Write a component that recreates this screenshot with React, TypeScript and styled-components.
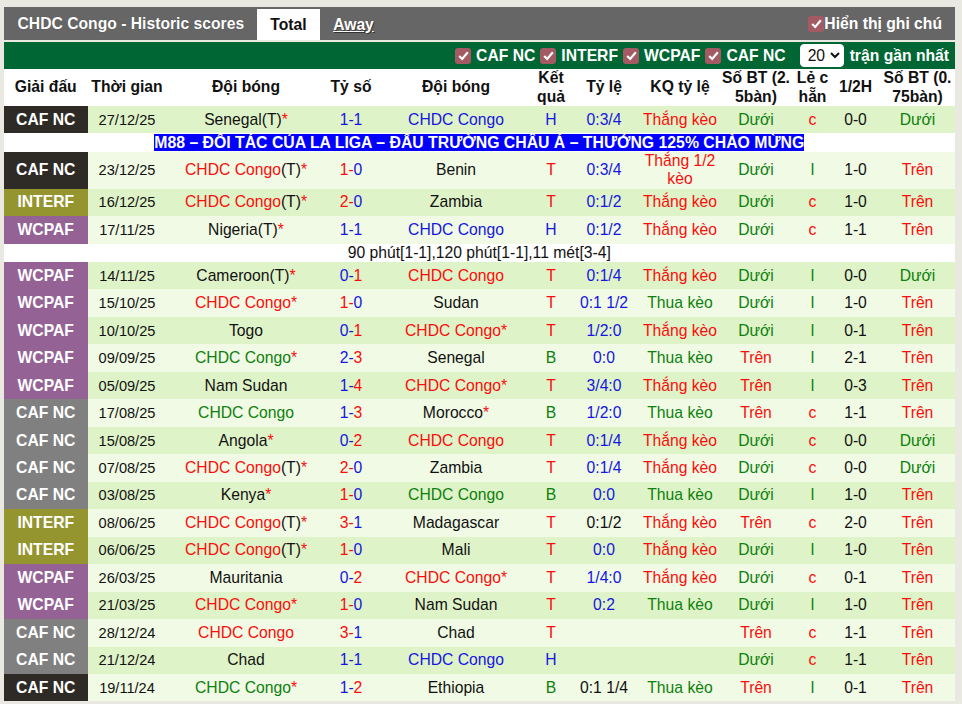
import React from 'react';
import styled, { createGlobalStyle } from 'styled-components';

const GlobalStyle = createGlobalStyle`
  html, body {
    margin: 0;
    padding: 0;
    background: #e9e8e1;
    font-family: "Liberation Sans", Arial, sans-serif;
    color: #111;
  }
`;

const RED = '#fa0d0d';
const BLUE = '#1616e0';
const GREEN = '#0d800d';
const INK = '#111111';

const LEAGUE_BG: Record<string, string> = {
  dark: '#2e2a26',
  olive: '#95952f',
  purple: '#956295',
  gray: '#808080',
};

const Page = styled.div`
  width: 951.5px;
  height: 704px;
  margin-left: 3.5px;
  padding-top: 7px;
  box-sizing: border-box;
  overflow: hidden;
`;

const TitleBar = styled.div`
  display: flex;
  align-items: flex-end;
  height: 33px;
  background: #666666;
  color: #ffffff;
  font-weight: bold;
  font-size: 15.7px;
`;

const Title = styled.div`
  align-self: center;
  padding-left: 14px;
  width: 239.5px;
  text-shadow: 0 0 1px rgba(0, 0, 0, 0.4);
`;

const Tab = styled.a<{ $active?: boolean }>`
  height: 31px;
  line-height: 31px;
  text-align: center;
  width: ${(p) => (p.$active ? '63px' : '67px')};
  background: ${(p) => (p.$active ? '#ffffff' : 'transparent')};
  color: ${(p) => (p.$active ? '#111111' : '#ffffff')};
  text-decoration: ${(p) => (p.$active ? 'none' : 'underline')};
  text-shadow: ${(p) => (p.$active ? 'none' : '1px 1px 1px rgba(0, 0, 0, 0.5)')};
`;

const NoteToggle = styled.label`
  align-self: center;
  margin-left: auto;
  margin-right: 13px;
  display: flex;
  align-items: center;
`;

const Box = styled.span`
  display: inline-flex;
  align-items: center;
  justify-content: center;
  width: 16px;
  height: 16px;
  border-radius: 3px;
  background: #a35a62;
  flex: none;
`;

const FilterBar = styled.div`
  display: flex;
  align-items: center;
  justify-content: flex-end;
  height: 27px;
  margin-top: 2px;
  padding-right: 6px;
  background: #006633;
  color: #ffffff;
  font-weight: bold;
  font-size: 15.7px;
`;

const Filter = styled.label`
  display: flex;
  align-items: center;
  gap: 5px;
  margin-left: 5px;
`;

const Count = styled.select`
  width: 44px;
  height: 23px;
  margin: 0 6px 0 14px;
  padding: 0 0 0 3px;
  border: 1px solid #ffffff;
  border-radius: 4px;
  background: #ffffff;
  color: #111111;
  font-family: inherit;
  font-size: 15.7px;
`;

const Table = styled.table`
  width: 951.5px;
  table-layout: fixed;
  border-collapse: collapse;
  border-spacing: 0;
  font-size: 15.7px;
  background: #ffffff;
`;

const Column = styled.col<{ $w: number }>`
  width: ${(p) => p.$w}px;
`;

const HeadCell = styled.th`
  height: 37px;
  padding: 0;
  font-weight: bold;
  font-size: 15.7px;
  line-height: 18.5px;
  text-align: center;
  color: #111111;
`;

const Row = styled.tr<{ $even: boolean }>`
  height: 27.47px;
  background: ${(p) => (p.$even ? '#dff3c8' : '#f0fae4')};
`;

const TallRow = styled(Row)`
  height: 36.7px;
`;

const Cell = styled.td<{ $color?: string }>`
  padding: 0;
  text-align: center;
  line-height: 18px;
  color: ${(p) => p.$color || INK};
`;

const DateCell = styled(Cell)`
  font-size: 14.6px;
`;

const LeagueCell = styled.td<{ $kind: string }>`
  padding: 0;
  text-align: center;
  font-weight: bold;
  color: #ffffff;
  background: ${(p) => LEAGUE_BG[p.$kind]};
`;

const Star = styled.span`
  color: ${RED};
`;

const Tinted = styled.span<{ $color: string }>`
  color: ${(p) => p.$color};
`;

const AdRow = styled.tr`
  height: 18.5px;
  background: #ffffff;
`;

const AdCell = styled.td`
  padding: 0;
  text-align: center;
  font-size: 15.8px;
  line-height: 18px;
  font-weight: bold;
  white-space: nowrap;
`;

const AdText = styled.span`
  background: #0000ff;
  color: #ffffff;
`;

const NoteRow = styled.tr`
  height: 18.4px;
  background: #ffffff;
`;

const NoteCell = styled.td`
  padding: 0;
  text-align: center;
  line-height: 18px;
`;

const CheckBox = () => (
  <Box>
    <svg width="13" height="13" viewBox="0 0 12 12" fill="none">
      <path d="M2 6.4 4.8 9.2 10 3" stroke="#ffffff" strokeWidth="2" />
    </svg>
  </Box>
);

type Team = { name: string; color?: string; neutral?: boolean; star?: boolean };

type Match = {
  league: string;
  label: string;
  date: string;
  home: Team;
  score: [number, number];
  away: Team;
  result: string;
  odds: string;
  oddsColor?: string;
  pick: string;
  goals: string;
  parity: string;
  half: string;
  early: string;
};

const congo = (color: string, neutral = false, star = false): Team => ({
  name: 'CHDC Congo',
  color,
  neutral,
  star,
});
const team = (name: string, neutral = false, star = false): Team => ({ name, neutral, star });

const m = (
  league: string,
  label: string,
  date: string,
  home: Team,
  score: [number, number],
  away: Team,
  result: string,
  odds: string,
  pick: string,
  goals: string,
  parity: string,
  half: string,
  early: string,
  oddsColor?: string,
): Match => ({ league, label, date, home, score, away, result, odds, pick, goals, parity, half, early, oddsColor });

const WIN = 'Thắng kèo';
const LOSE = 'Thua kèo';
const UP = 'Trên';
const DOWN = 'Dưới';

const MATCHES: Match[] = [
  m('dark', 'CAF NC', '27/12/25', team('Senegal', true, true), [1, 1], congo(BLUE), 'H', '0:3/4', WIN, DOWN, 'c', '0-0', DOWN),
  m('dark', 'CAF NC', '23/12/25', congo(RED, true, true), [1, 0], team('Benin'), 'T', '0:3/4', 'Thắng 1/2 kèo', DOWN, 'l', '1-0', UP),
  m('olive', 'INTERF', '16/12/25', congo(RED, true, true), [2, 0], team('Zambia'), 'T', '0:1/2', WIN, DOWN, 'c', '1-0', UP),
  m('purple', 'WCPAF', '17/11/25', team('Nigeria', true, true), [1, 1], congo(BLUE), 'H', '0:1/2', WIN, DOWN, 'c', '1-1', UP),
  m('purple', 'WCPAF', '14/11/25', team('Cameroon', true, true), [0, 1], congo(RED), 'T', '0:1/4', WIN, DOWN, 'l', '0-0', DOWN),
  m('purple', 'WCPAF', '15/10/25', congo(RED, false, true), [1, 0], team('Sudan'), 'T', '0:1 1/2', LOSE, DOWN, 'l', '1-0', UP),
  m('purple', 'WCPAF', '10/10/25', team('Togo'), [0, 1], congo(RED, false, true), 'T', '1/2:0', WIN, DOWN, 'l', '0-1', UP),
  m('purple', 'WCPAF', '09/09/25', congo(GREEN, false, true), [2, 3], team('Senegal'), 'B', '0:0', LOSE, UP, 'l', '2-1', UP),
  m('purple', 'WCPAF', '05/09/25', team('Nam Sudan'), [1, 4], congo(RED, false, true), 'T', '3/4:0', WIN, UP, 'l', '0-3', UP),
  m('gray', 'CAF NC', '17/08/25', congo(GREEN), [1, 3], team('Morocco', false, true), 'B', '1/2:0', LOSE, UP, 'c', '1-1', UP),
  m('gray', 'CAF NC', '15/08/25', team('Angola', false, true), [0, 2], congo(RED), 'T', '0:1/4', WIN, DOWN, 'c', '0-0', DOWN),
  m('gray', 'CAF NC', '07/08/25', congo(RED, true, true), [2, 0], team('Zambia'), 'T', '0:1/4', WIN, DOWN, 'c', '0-0', DOWN),
  m('gray', 'CAF NC', '03/08/25', team('Kenya', false, true), [1, 0], congo(GREEN), 'B', '0:0', LOSE, DOWN, 'l', '1-0', UP),
  m('olive', 'INTERF', '08/06/25', congo(RED, true, true), [3, 1], team('Madagascar'), 'T', '0:1/2', WIN, UP, 'c', '2-0', UP, INK),
  m('olive', 'INTERF', '06/06/25', congo(RED, true, true), [1, 0], team('Mali'), 'T', '0:0', WIN, DOWN, 'l', '1-0', UP),
  m('purple', 'WCPAF', '26/03/25', team('Mauritania'), [0, 2], congo(RED, false, true), 'T', '1/4:0', WIN, DOWN, 'c', '0-1', UP),
  m('purple', 'WCPAF', '21/03/25', congo(RED, false, true), [1, 0], team('Nam Sudan'), 'T', '0:2', LOSE, DOWN, 'l', '1-0', UP),
  m('gray', 'CAF NC', '28/12/24', congo(RED), [3, 1], team('Chad'), 'T', '', '', UP, 'c', '1-1', UP),
  m('gray', 'CAF NC', '21/12/24', team('Chad'), [1, 1], congo(BLUE), 'H', '', '', DOWN, 'c', '1-1', UP),
  m('dark', 'CAF NC', '19/11/24', congo(GREEN, false, true), [1, 2], team('Ethiopia'), 'B', '0:1 1/4', LOSE, UP, 'l', '0-1', UP, INK),
];

const COLUMNS = [84.5, 78, 160, 50, 160, 30, 76, 76, 76, 37, 49, 75];

const RESULT_COLOR: Record<string, string> = { T: RED, H: BLUE, B: GREEN };

const TeamName = ({ team: t }: { team: Team }) => (
  <>
    <Tinted $color={t.color || INK}>{t.name}</Tinted>
    {t.neutral && '(T)'}
    {t.star && <Star>*</Star>}
  </>
);

const Score = ({ score: [a, b] }: { score: [number, number] }) => (
  <>
    <Tinted $color={a > b ? RED : BLUE}>{a}-</Tinted>
    <Tinted $color={b > a ? RED : BLUE}>{b}</Tinted>
  </>
);

const MatchRow = ({ match, even }: { match: Match; even: boolean }) => {
  const RowKind = match.pick.length > 10 ? TallRow : Row;
  return (
    <RowKind $even={even}>
      <LeagueCell $kind={match.league}>{match.label}</LeagueCell>
      <DateCell>{match.date}</DateCell>
      <Cell>
        <TeamName team={match.home} />
      </Cell>
      <Cell>
        <Score score={match.score} />
      </Cell>
      <Cell>
        <TeamName team={match.away} />
      </Cell>
      <Cell $color={RESULT_COLOR[match.result]}>{match.result}</Cell>
      <Cell $color={match.oddsColor || BLUE}>{match.odds}</Cell>
      <Cell $color={match.pick === LOSE ? GREEN : RED}>{match.pick}</Cell>
      <Cell $color={match.goals === UP ? RED : GREEN}>{match.goals}</Cell>
      <Cell $color={match.parity === 'c' ? RED : GREEN}>{match.parity}</Cell>
      <Cell>{match.half}</Cell>
      <Cell $color={match.early === UP ? RED : GREEN}>{match.early}</Cell>
    </RowKind>
  );
};

export default function App() {
  return (
    <>
      <GlobalStyle />
      <Page>
        <TitleBar>
          <Title>CHDC Congo - Historic scores</Title>
          <Tab $active>Total</Tab>
          <Tab>Away</Tab>
          <NoteToggle>
            <CheckBox />
            Hiển thị ghi chú
          </NoteToggle>
        </TitleBar>
        <FilterBar>
          {['CAF NC', 'INTERF', 'WCPAF', 'CAF NC'].map((name, i) => (
            <Filter key={i}>
              <CheckBox />
              {name}
            </Filter>
          ))}
          <Count defaultValue="20">
            <option value="20">20</option>
          </Count>
          trận gần nhất
        </FilterBar>
        <Table>
          <colgroup>
            {COLUMNS.map((w, i) => (
              <Column key={i} $w={w} />
            ))}
          </colgroup>
          <thead>
            <tr>
              <HeadCell>Giải đấu</HeadCell>
              <HeadCell>Thời gian</HeadCell>
              <HeadCell>Đội bóng</HeadCell>
              <HeadCell>Tỷ số</HeadCell>
              <HeadCell>Đội bóng</HeadCell>
              <HeadCell>
                Kết
                <br />
                quả
              </HeadCell>
              <HeadCell>Tỷ lệ</HeadCell>
              <HeadCell>KQ tỷ lệ</HeadCell>
              <HeadCell>
                Số BT (2.
                <br />
                5bàn)
              </HeadCell>
              <HeadCell>
                Lẻ c
                <br />
                hẵn
              </HeadCell>
              <HeadCell>1/2H</HeadCell>
              <HeadCell>
                Số BT (0.
                <br />
                75bàn)
              </HeadCell>
            </tr>
          </thead>
          <tbody>
            {MATCHES.map((match, i) => (
              <React.Fragment key={match.date}>
                <MatchRow match={match} even={i % 2 === 0} />
                {i === 0 && (
                  <AdRow>
                    <AdCell colSpan={12}>
                      <AdText>M88 – ĐỐI TÁC CỦA LA LIGA – ĐẤU TRƯỜNG CHÂU Á – THƯỞNG 125% CHÀO MỪNG</AdText>
                    </AdCell>
                  </AdRow>
                )}
                {i === 3 && (
                  <NoteRow>
                    <NoteCell colSpan={12}>90 phút[1-1],120 phút[1-1],11 mét[3-4]</NoteCell>
                  </NoteRow>
                )}
              </React.Fragment>
            ))}
          </tbody>
        </Table>
      </Page>
    </>
  );
}
